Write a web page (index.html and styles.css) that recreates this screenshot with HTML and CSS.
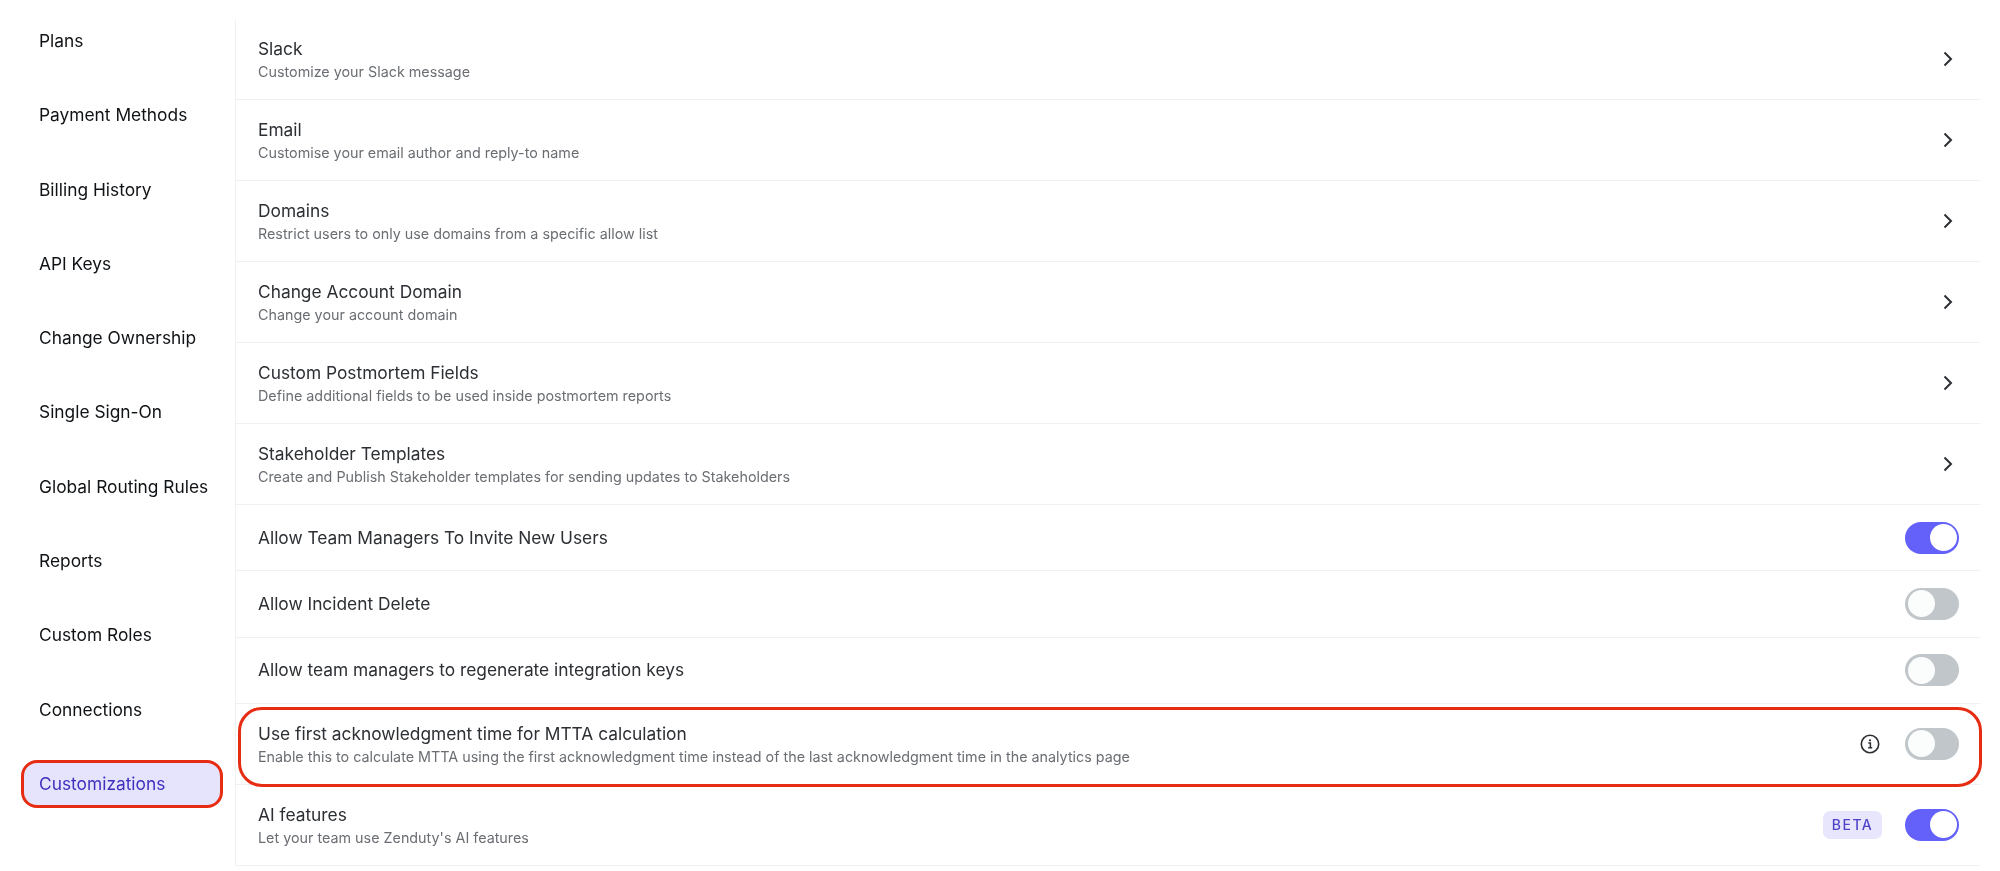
FILE: index.html
```html
<!DOCTYPE html>
<html lang="en">
<head>
<meta charset="utf-8">
<title>Customizations</title>
<link rel="stylesheet" href="styles.css">
</head>
<body>
<svg class="defs" width="0" height="0" aria-hidden="true">
  <symbol id="chev" viewBox="0 0 10 16"><path d="M1.500 1.500 8 8l-6.500 6.500" fill="none" stroke="currentColor" stroke-width="2"/></symbol>
</svg>
<div class="page">
  <nav class="side">
    <a class="nav">Plans</a>
    <a class="nav">Payment Methods</a>
    <a class="nav">Billing History</a>
    <a class="nav">API Keys</a>
    <a class="nav">Change Ownership</a>
    <a class="nav">Single Sign-On</a>
    <a class="nav">Global Routing Rules</a>
    <a class="nav">Reports</a>
    <a class="nav">Custom Roles</a>
    <a class="nav">Connections</a>
    <a class="nav active">Customizations</a>
  </nav>
  <main class="list">
    <div class="row"><div class="txt"><div class="title">Slack</div><div class="sub">Customize your Slack message</div></div><svg class="chev"><use href="#chev"/></svg></div>
    <div class="row"><div class="txt"><div class="title">Email</div><div class="sub">Customise your email author and reply-to name</div></div><svg class="chev"><use href="#chev"/></svg></div>
    <div class="row"><div class="txt"><div class="title">Domains</div><div class="sub">Restrict users to only use domains from a specific allow list</div></div><svg class="chev"><use href="#chev"/></svg></div>
    <div class="row"><div class="txt"><div class="title">Change Account Domain</div><div class="sub">Change your account domain</div></div><svg class="chev"><use href="#chev"/></svg></div>
    <div class="row"><div class="txt"><div class="title">Custom Postmortem Fields</div><div class="sub">Define additional fields to be used inside postmortem reports</div></div><svg class="chev"><use href="#chev"/></svg></div>
    <div class="row"><div class="txt"><div class="title">Stakeholder Templates</div><div class="sub">Create and Publish Stakeholder templates for sending updates to Stakeholders</div></div><svg class="chev"><use href="#chev"/></svg></div>
    <div class="row short"><div class="txt"><div class="title">Allow Team Managers To Invite New Users</div></div><span class="toggle on"></span></div>
    <div class="row short"><div class="txt"><div class="title">Allow Incident Delete</div></div><span class="toggle"></span></div>
    <div class="row short"><div class="txt"><div class="title">Allow team managers to regenerate integration keys</div></div><span class="toggle"></span></div>
    <div class="row marked"><div class="txt"><div class="title">Use first acknowledgment time for MTTA calculation</div><div class="sub">Enable this to calculate MTTA using the first acknowledgment time instead of the last acknowledgment time in the analytics page</div></div>
      <svg class="info" viewBox="0 0 20 20"><circle cx="10" cy="10" r="8.700" fill="none" stroke="currentColor" stroke-width="1.600"/><circle cx="10" cy="6.300" r="1.100" fill="currentColor"/><path d="M8.300 9h2.100v4.600M8.200 13.800h4" fill="none" stroke="currentColor" stroke-width="1.500"/></svg>
      <span class="toggle"></span></div>
    <div class="row"><div class="txt"><div class="title">AI features</div><div class="sub">Let your team use Zenduty's AI features</div></div><span class="beta">BETA</span><span class="toggle on"></span></div>
  </main>
</div>
</body>
</html>
```
FILE: styles.css
```css
* { box-sizing: border-box; }
html, body { margin: 0; height: 100%; overflow: hidden; background: #fff; }
body { font-family: Inter, "Liberation Sans", sans-serif; }
.defs { position: absolute; }
.page { display: flex; height: 871px; align-items: flex-start; filter: blur(0.35px); }

.side { width: 235px; flex: none; padding: 17.500px 0 0 21px; display: flex; flex-direction: column; gap: 27.300px; }
.nav { display: flex; align-items: center; width: 202px; height: 47px; padding-left: 18px; font-size: 17.350px; line-height: 24px; color: #101316; white-space: nowrap; }
.nav.active { height: 48px; color: #3f2fbf; background: #e6e4fc; border: 3px solid #e62c12; border-radius: 16px; padding-left: 15px; }

.list { width: 1745px; margin-top: 19px; border-left: 1px solid #f0f1f2; }
.row { position: relative; display: flex; align-items: center; height: 81px; padding: 0 21px 0 22px; border-bottom: 1px solid #f0f1f2; }
.row.short { height: 66.330px; }
.txt { flex: 1; min-width: 0; padding-top: 1px; }
.short .txt { padding-top: 0; }
.title { font-size: 17.330px; line-height: 24px; color: #2c2f33; }
.sub { margin-top: 0.500px; font-size: 14.340px; line-height: 20px; color: #6a6e73; }

.chev { width: 10px; height: 16px; margin-right: 6px; color: #2c2f33; }

.toggle { position: relative; flex: none; width: 54px; height: 32px; border-radius: 16px; background: #c0c6c9; }
.toggle::after { content: ""; position: absolute; top: 2.500px; left: 2.500px; width: 27px; height: 27px; border-radius: 50%; background: #fbfcfc; }
.toggle.on { background: #6461fb; }
.toggle.on::after { left: 24.500px; background: #fff; }

.info { width: 20px; height: 20px; margin-right: 25px; color: #2b2e32; }
.beta { flex: none; width: 59px; height: 28px; margin-right: 23px; display: flex; align-items: center; justify-content: center; border-radius: 7px; background: #e8e6fd; color: #4f44c8; font-size: 14px; font-weight: 500; letter-spacing: 1.500px; }

.marked::after { content: ""; position: absolute; left: 2px; right: -2px; top: 3px; bottom: -3px; border: 3px solid #e62c12; border-radius: 24px; pointer-events: none; }
```
